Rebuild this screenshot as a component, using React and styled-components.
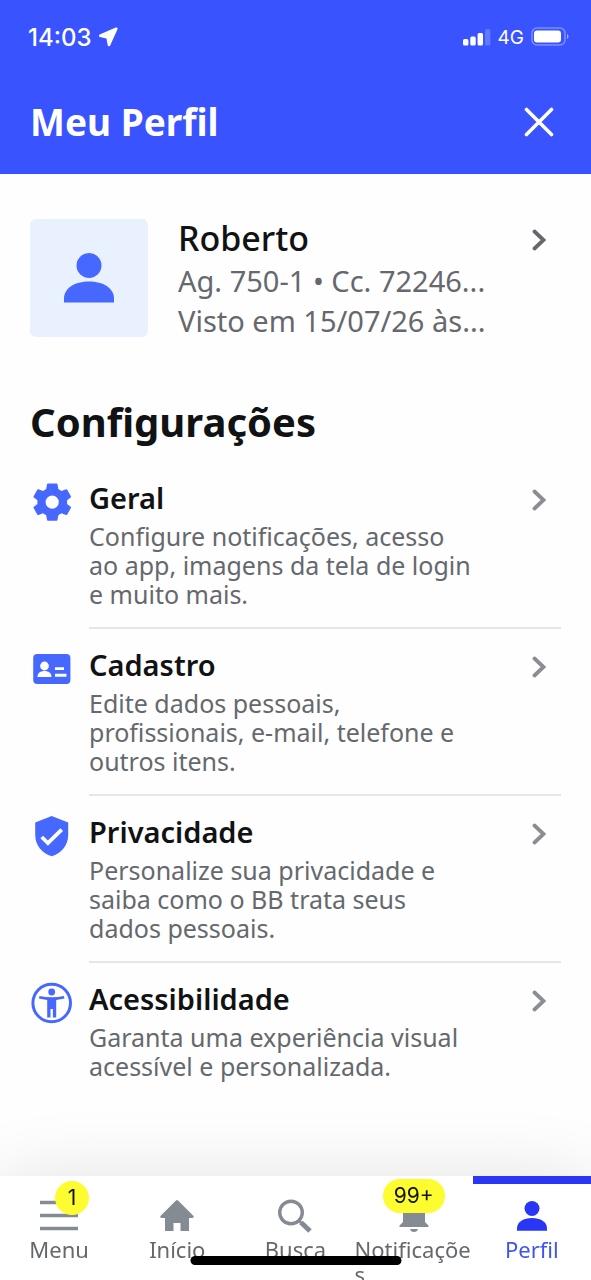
import React from 'react'
import styled, { createGlobalStyle } from 'styled-components'

const settings = [
    {
        id: 'geral',
        icon: GearIcon,
        title: 'Geral',
        text: 'Configure notificações, acesso ao app, imagens da tela de login e muito mais.',
    },
    {
        id: 'cadastro',
        icon: CardIcon,
        title: 'Cadastro',
        text: 'Edite dados pessoais, profissionais, e-mail, telefone e outros itens.',
    },
    {
        id: 'privacidade',
        icon: ShieldIcon,
        title: 'Privacidade',
        text: 'Personalize sua privacidade e saiba como o BB trata seus dados pessoais.',
    },
    {
        id: 'acessibilidade',
        icon: AccessIcon,
        title: 'Acessibilidade',
        text: 'Garanta uma experiência visual acessível e personalizada.',
    },
]

const tabs = [
    { id: 'menu', icon: MenuIcon, label: 'Menu', badge: '1' },
    { id: 'inicio', icon: HomeIcon, label: 'Início' },
    { id: 'busca', icon: SearchIcon, label: 'Busca' },
    { id: 'notificacoes', icon: BellIcon, label: 'Notificações', badge: '99+' },
    { id: 'perfil', icon: UserIcon, label: 'Perfil', active: true },
]

export default function App() {
  return (
    <Page>
        <GlobalStyle />
        <Header>
            <StatusBar>
                <Clock>
                    14:03
                    <LocationIcon />
                </Clock>
                <Signals>
                    <SignalIcon />
                    4G
                    <BatteryIcon />
                </Signals>
            </StatusBar>
            <TitleBar>
                <PageTitle>Meu Perfil</PageTitle>
                <CloseButton type="button" aria-label="Fechar">
                    <CloseIcon />
                </CloseButton>
            </TitleBar>
        </Header>

        <Content>
            <Profile href="#conta">
                <Avatar>
                    <PersonIcon size={50} />
                </Avatar>
                <ProfileText>
                    <Name>Roberto</Name>
                    <Detail>Ag. 750-1 • Cc. 72246...</Detail>
                    <Detail>Visto em 15/07/26 às...</Detail>
                </ProfileText>
                <ProfileArrow>
                    <ChevronIcon />
                </ProfileArrow>
            </Profile>

            <SectionTitle>Configurações</SectionTitle>
            <List>
                {settings.map(({ id, icon: Icon, title, text }) => (
                    <li key={id}>
                        <Item href={`#${id}`}>
                            <ItemIcon>
                                <Icon />
                            </ItemIcon>
                            <ItemBody>
                                <ItemText>
                                    <ItemTitle>{title}</ItemTitle>
                                    <ItemDescription>{text}</ItemDescription>
                                </ItemText>
                                <Arrow>
                                    <ChevronIcon />
                                </Arrow>
                            </ItemBody>
                        </Item>
                    </li>
                ))}
            </List>
        </Content>

        <TabBar>
            {tabs.map(({ id, icon: Icon, label, badge, active }) => (
                <Tab key={id} href={`#${id}`} $active={active}>
                    <TabIcon>
                        <Icon />
                        {badge && <Badge $wide={badge.length > 1}>{badge}</Badge>}
                    </TabIcon>
                    <TabLabel>{label}</TabLabel>
                </Tab>
            ))}
            <HomeIndicator />
        </TabBar>
    </Page>
  )
}

/* icons */

function LocationIcon() {
    return (
        <svg width="20" height="20" viewBox="0 0 20 20" aria-hidden="true">
            <path d="M18.300 1.700 2.200 8.800l7.400 1.600 1.400 7.500Z" fill="#fff" stroke="#fff" strokeWidth="2.600" strokeLinejoin="round" />
        </svg>
    )
}

function SignalIcon() {
    return (
        <svg width="28" height="18" viewBox="0 0 28 18" fill="#fff" aria-hidden="true">
            <rect x="0" y="11" width="5.400" height="6.500" rx="1.500" />
            <rect x="7.300" y="8.500" width="5.400" height="9" rx="1.500" />
            <rect x="14.600" y="5" width="5.400" height="12.500" rx="1.500" />
            <rect x="22" y="1" width="5.400" height="16.500" rx="1.500" opacity=".22" />
        </svg>
    )
}

function BatteryIcon() {
    return (
        <svg width="38" height="20" viewBox="0 0 38 20" fill="none" aria-hidden="true">
            <rect x="1" y="1" width="33" height="17" rx="5" stroke="#fff" strokeOpacity=".35" strokeWidth="1.500" />
            <rect x="3" y="3.500" width="27" height="12" rx="3" fill="#fff" />
            <path d="M36 7c2 .8 2 4.200 0 5Z" fill="#fff" fillOpacity=".5" />
        </svg>
    )
}

function CloseIcon() {
    return (
        <svg width="30" height="30" viewBox="0 0 30 30" aria-hidden="true">
            <path d="M2.500 2.500 27.500 27.500M27.500 2.500 2.500 27.500" stroke="#fff" strokeWidth="3.600" strokeLinecap="round" />
        </svg>
    )
}

function ChevronIcon() {
    return (
        <svg width="14" height="22" viewBox="0 0 14 22" fill="none" aria-hidden="true">
            <path d="M2.500 2.500 11.500 11 2.500 19.500" stroke="currentColor" strokeWidth="3.800" strokeLinecap="round" />
        </svg>
    )
}

function PersonIcon({ size }) {
    return (
        <svg width={size} height={size} viewBox="0 0 50 50" fill="currentColor" aria-hidden="true">
            <circle cx="25" cy="12.500" r="12.500" />
            <path d="M0 49.500v-4C0 35 11 28.500 25 28.500s25 6.500 25 17v4Z" />
        </svg>
    )
}

function UserIcon() {
    return <PersonIcon size={30} />
}

function GearIcon() {
    return (
        <svg width="42" height="42" viewBox="0 0 42 42" fill="currentColor" aria-hidden="true">
            <path
                fillRule="evenodd"
                d="M17 2.500h8.500a1 1 0 0 1 1 .8l.8 4.700 3.200 1.900 4.500-1.700a1 1 0 0 1 1.200.5l3.700 6.500a1 1 0 0 1-.3 1.300l-3.500 2.700v3.800l3.500 2.700a1 1 0 0 1 .3 1.300l-3.700 6.500a1 1 0 0 1-1.200.5l-4.500-1.700-3.200 1.900-.8 4.700a1 1 0 0 1-1 .8H17a1 1 0 0 1-1-.8l-.8-4.700-3.200-1.900-4.500 1.700a1 1 0 0 1-1.200-.5L2.600 27a1 1 0 0 1 .3-1.300L6.400 23v-3.800l-3.500-2.700a1 1 0 0 1-.3-1.300l3.700-6.500a1 1 0 0 1 1.200-.5L12 9.900 15.200 8l.8-4.700a1 1 0 0 1 1-.8ZM21.200 14.500a6.600 6.600 0 1 0 0 13.200 6.600 6.600 0 0 0 0-13.200Z"
            />
        </svg>
    )
}

function CardIcon() {
    return (
        <svg width="42" height="42" viewBox="0 0 42 42" aria-hidden="true">
            <rect x="2.200" y="6" width="37.200" height="30" rx="4" fill="currentColor" />
            <circle cx="13.500" cy="18" r="4.400" fill="#fff" />
            <path d="M6.500 29c0-4 3-6 7-6s7 2 7 6ZM24 19.200h9v2.900h-9ZM24 25.800h11.500v2.900H24Z" fill="#fff" />
        </svg>
    )
}

function ShieldIcon() {
    return (
        <svg width="42" height="42" viewBox="0 0 42 42" aria-hidden="true">
            <path d="M20.700 1 37.200 7.500V20c0 10.500-7 18.500-16.500 21.200C11.200 38.500 4.200 30.500 4.200 20V7.500Z" fill="currentColor" />
            <path d="m10.700 22 6.200 6L30.700 14.700" stroke="#fff" strokeWidth="3.800" fill="none" />
        </svg>
    )
}

function AccessIcon() {
    return (
        <svg width="42" height="42" viewBox="0 0 42 42" fill="currentColor" aria-hidden="true">
            <circle cx="20.700" cy="21" r="18.800" fill="none" stroke="currentColor" strokeWidth="3" />
            <circle cx="20.700" cy="10" r="3.400" />
            <path d="M8.500 14c8.200 1.600 16.200 1.600 24.400 0l.6 2.600c-2.600.6-5.300 1.200-8.300 1.500V35.500h-3.300v-8.500h-2.400v8.500h-3.300V18.100c-3-.3-5.700-.9-8.300-1.500Z" />
        </svg>
    )
}

function MenuIcon() {
    return (
        <svg width="38" height="32" viewBox="0 0 38 32" aria-hidden="true">
            <path d="M0 2.500h38M0 15.500h38M0 28.500h38" stroke="currentColor" strokeWidth="3.600" />
        </svg>
    )
}

function HomeIcon() {
    return (
        <svg width="34" height="32" viewBox="0 0 34 32" fill="currentColor" aria-hidden="true">
            <path d="M16 .5a1.500 1.500 0 0 1 2 0l15.300 15.300c.8.900.4 2.200-.8 2.200H29v13h-8.500v-8h-7v8H5V18H1.500C.3 18-.1 16.700.7 15.800Z" />
        </svg>
    )
}

function SearchIcon() {
    return (
        <svg width="34" height="34" viewBox="0 0 34 34" fill="none" stroke="currentColor" aria-hidden="true">
            <circle cx="13" cy="13.500" r="11.300" strokeWidth="3.400" />
            <path d="m20.500 21.500 3.500 3" strokeWidth="2.500" />
            <path d="m23 23.500 9 8.500" strokeWidth="5" />
        </svg>
    )
}

function BellIcon() {
    return (
        <svg width="30" height="34" viewBox="0 0 30 34" fill="currentColor" aria-hidden="true">
            <path d="M4 12C4 5.500 8.500 1 15 1s11 4.500 11 11v11l3.500 3.500V28H.5v-1.500L4 23ZM11 30h8c-.4 2-2 3-4 3s-3.600-1-4-3Z" />
        </svg>
    )
}

/* styles */

const GlobalStyle = createGlobalStyle`

    * {
        box-sizing : border-box ;
    }
    body {
        margin : 0 ;
        background : #fefefe ;
        color : #111214 ;
        font-family : "Noto Sans", sans-serif ;
    }
    a {
        color : inherit ;
        text-decoration : none ;
    }
    h1, h2, h3, p, ul {
        margin : 0 ;
        padding : 0 ;
    }
    svg {
        display : block ;
        flex-shrink : 0 ;
    }

`
const Page = styled.div`

    display : flex ;
    flex-direction : column ;
    min-height : 100vh ;

`
const Header = styled.header`

    background : #3853ff ;
    color : #fff ;

`
const StatusBar = styled.div`

    display : flex ;
    align-items : center ;
    justify-content : space-between ;
    height : 74px ;
    padding : 0 22px 0 28px ;
    font-family : Inter, sans-serif ;

`
const Clock = styled.div`

    display : flex ;
    align-items : center ;
    gap : 6px ;
    font-size : 24px ;
    font-weight : 500 ;

`
const Signals = styled.div`

    display : flex ;
    align-items : center ;
    gap : 7px ;
    font-size : 19px ;

`
const TitleBar = styled.div`

    display : flex ;
    align-items : center ;
    justify-content : space-between ;
    height : 100px ;
    padding : 0 30px 4px ;

`
const PageTitle = styled.h1`

    font-size : 37px ;
    line-height : 48px ;
    font-weight : 700 ;

`
const CloseButton = styled.button`

    display : grid ;
    place-items : center ;
    width : 44px ;
    height : 44px ;
    padding : 0 ;
    border : 0 ;
    background : none ;
    cursor : pointer ;

`
const Content = styled.main`

    flex : 1 ;
    padding : 44px 30px 60px ;

`
const Profile = styled.a`

    display : flex ;
    align-items : flex-start ;

`
const Avatar = styled.div`

    display : grid ;
    place-items : center ;
    flex-shrink : 0 ;
    width : 118px ;
    height : 118px ;
    margin : 1px 30px 0 0 ;
    border-radius : 6px ;
    background : #e9f1ff ;
    color : #4668ff ;

`
const ProfileText = styled.div`

    flex : 1 ;
    min-width : 0 ;

`
const Name = styled.p`

    margin-bottom : 3px ;
    font-size : 34px ;
    line-height : 40px ;
    font-weight : 500 ;

`
const Detail = styled.p`

    overflow : hidden ;
    color : #65686d ;
    font-size : 29px ;
    line-height : 40px ;
    white-space : nowrap ;
    text-overflow : ellipsis ;

`
const Arrow = styled.span`

    display : flex ;
    align-items : center ;
    justify-content : flex-end ;
    flex-shrink : 0 ;
    width : 85px ;
    height : 36px ;
    padding-right : 15px ;
    color : #8a8d91 ;

`
const ProfileArrow = styled(Arrow)`

    width : 60px ;
    height : 44px ;
    color : #65686d ;

`
const SectionTitle = styled.h2`

    margin-top : 57px ;
    font-size : 40px ;
    line-height : 48px ;
    font-weight : 700 ;

`
const List = styled.ul`

    margin-top : 16px ;
    list-style : none ;

`
const Item = styled.a`

    display : flex ;

`
const ItemIcon = styled.span`

    flex-shrink : 0 ;
    width : 59px ;
    padding : 19px 0 0 1px ;
    color : #4668ff ;

`
const ItemBody = styled.div`

    display : flex ;
    flex : 1 ;
    min-width : 0 ;
    padding : 20px 0 18px ;
    border-bottom : 2px solid #e5e6e8 ;

    li:last-child & {
        border-bottom : 0 ;
    }

`
const ItemText = styled.div`

    flex : 1 ;
    min-width : 0 ;

`
const ItemTitle = styled.h3`

    margin-bottom : 8px ;
    font-size : 29px ;
    line-height : 32px ;
    font-weight : 600 ;

`
const ItemDescription = styled.p`

    color : #65686d ;
    font-size : 25px ;
    line-height : 29px ;

`
const TabBar = styled.nav`

    position : sticky ;
    bottom : 0 ;
    display : grid ;
    grid-template-columns : repeat(5, minmax(0, 1fr)) ;
    height : 104px ;
    background : #fff ;
    box-shadow : 0 10px 80px rgba(0, 0, 0, .14) ;
    clip-path : inset(-120px 0 0) ;

`
const Tab = styled.a`

    display : flex ;
    flex-direction : column ;
    align-items : center ;
    gap : 4px ;
    min-width : 0 ;
    padding-top : 14px ;
    border-top : 8px solid ${props => props.$active ? '#2a36f5' : 'transparent'} ;
    color : ${props => props.$active ? '#3f55ee' : '#65686d'} ;

    svg {
        color : ${props => props.$active ? '#2a36f5' : '#858b93'} ;
    }

`
const TabIcon = styled.span`

    position : relative ;
    display : grid ;
    place-items : center ;
    height : 35px ;

`
const TabLabel = styled.span`

    max-width : 100% ;
    font-size : 22px ;
    line-height : 25px ;
    word-break : break-all ;

`
const Badge = styled.span`

    position : absolute ;
    left : 50% ;
    bottom : ${props => props.$wide ? '20px' : '18px'} ;
    width : ${props => props.$wide ? '62px' : '34px'} ;
    height : 34px ;
    margin-left : ${props => props.$wide ? '-31px' : '-4px'} ;
    border-radius : 17px ;
    background : #fdfc30 ;
    color : #111214 ;
    font-family : Inter, sans-serif ;
    font-size : 21px ;
    line-height : 34px ;
    text-align : center ;

`
const HomeIndicator = styled.div`

    position : absolute ;
    left : 50% ;
    bottom : 15px ;
    width : 211px ;
    height : 9px ;
    border-radius : 5px ;
    background : #000 ;
    transform : translateX(-50%) ;

`
